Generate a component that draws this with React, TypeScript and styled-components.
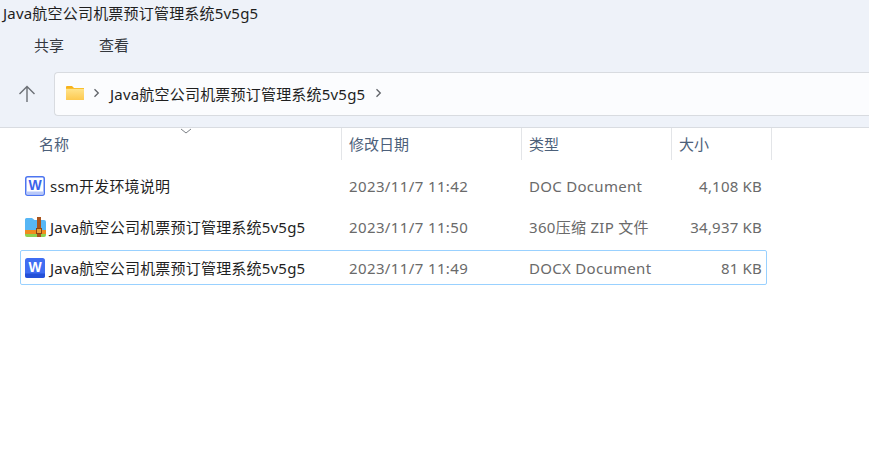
import React from 'react';
import styled, { createGlobalStyle } from 'styled-components';

const GlobalStyle = createGlobalStyle`
  html, body {
    margin: 0;
    padding: 0;
    width: 100%;
    height: 100%;
    overflow: hidden;
    background: #fff;
  }
  * { box-sizing: border-box; }
`;

type FileIcon = 'doc' | 'zip' | 'docx';

interface IFileRow {
  name: string;
  date: string;
  type: string;
  size: string;
  icon: FileIcon;
  selected?: boolean;
}

const files: IFileRow[] = [
  { name: 'ssm开发环境说明', date: '2023/11/7 11:42', type: 'DOC Document', size: '4,108 KB', icon: 'doc' },
  { name: 'Java航空公司机票预订管理系统5v5g5', date: '2023/11/7 11:50', type: '360压缩 ZIP 文件', size: '34,937 KB', icon: 'zip' },
  { name: 'Java航空公司机票预订管理系统5v5g5', date: '2023/11/7 11:49', type: 'DOCX Document', size: '81 KB', icon: 'docx', selected: true },
];

function Icon({ kind }: { kind: FileIcon }) {
  if (kind === 'zip') {
    return (
      <svg width="21" height="20" viewBox="0 0 21 20">
        <path d="M0 2.5A1.5 1.5 0 0 1 1.5 1h5.5l2.5 2H19a2 2 0 0 1 2 2v8H0z" fill="#56b6f5" />
        <rect x="0" y="13" width="21" height="4" fill="#f08c1e" />
        <path d="M0 17h21v1a2 2 0 0 1-2 2H2a2 2 0 0 1-2-2z" fill="#8fd14f" />
        <rect x="12" y="0" width="4" height="20" fill="#a9541c" />
        <rect x="11.5" y="11.5" width="5" height="5" fill="#e9a23b" stroke="#8b4513" strokeWidth="1" />
      </svg>
    );
  }
  if (kind === 'doc') {
    return (
      <svg width="20" height="20" viewBox="0 0 20 20">
        <rect x="0.75" y="0.75" width="18.5" height="18.5" rx="2" fill="#fff" stroke="#4d75f0" strokeWidth="1.5" />
        <rect x="1.5" y="15.5" width="17" height="3" fill="#b9c9fa" />
        <text x="10" y="14" textAnchor="middle" fontFamily="Liberation Sans" fontWeight="700" fontSize="14" letterSpacing="0" fill="#3a63ea">
          W
        </text>
      </svg>
    );
  }
  return (
    <svg width="20" height="20" viewBox="0 0 20 20">
      <rect width="20" height="20" rx="2.5" fill="#3f6df2" />
      <path d="M0 15.5h20V17.5a2.5 2.5 0 0 1-2.5 2.5h-15A2.5 2.5 0 0 1 0 17.5z" fill="#2450d8" />
      <text x="10" y="13.5" textAnchor="middle" fontFamily="Liberation Sans" fontWeight="700" fontSize="14" letterSpacing="0" fill="#fff">
        W
      </text>
    </svg>
  );
}

function Chevron() {
  return (
    <svg width="7" height="10" viewBox="0 0 7 10">
      <path d="M1.5 1.2 5.3 5 1.5 8.8" fill="none" stroke="#5f6368" strokeWidth="1.3" />
    </svg>
  );
}

export default function App() {
  return (
    <Page>
      <GlobalStyle />
      <TopArea>
        <TitleBar>Java航空公司机票预订管理系统5v5g5</TitleBar>
        <MenuBar>
          <MenuItem>共享</MenuItem>
          <MenuItem>查看</MenuItem>
        </MenuBar>
        <NavBar>
          <UpButton>
            <svg width="18" height="18" viewBox="0 0 18 18">
              <path d="M9 17V1.5M1.5 9 9 1.5 16.5 9" fill="none" stroke="#6b6f75" strokeWidth="1.4" />
            </svg>
          </UpButton>
          <AddressBar>
            <svg width="18" height="14" viewBox="0 0 18 14">
              <defs>
                <linearGradient id="folderFill" x1="0" y1="0" x2="0" y2="1">
                  <stop offset="0" stopColor="#ffe58f" />
                  <stop offset="1" stopColor="#fdc94f" />
                </linearGradient>
              </defs>
              <path d="M0 1a1 1 0 0 1 1-1h5l2 2H0z" fill="#f7b21c" />
              <rect y="2" width="18" height="12" rx="0.5" fill="url(#folderFill)" />
              <rect y="2" width="18" height="1" fill="#f9bf2e" />
            </svg>
            <Chevron />
            <Crumb>Java航空公司机票预订管理系统5v5g5</Crumb>
            <Chevron />
          </AddressBar>
        </NavBar>
      </TopArea>

      <HeaderRow>
        <SortMark>
          <svg width="12" height="6" viewBox="0 0 12 6">
            <path d="M1 1 6 5 11 1" fill="none" stroke="#7b7f85" strokeWidth="1" />
          </svg>
        </SortMark>
        <HeaderCell $width={342} $indent={39}>名称</HeaderCell>
        <HeaderCell $width={180}>修改日期</HeaderCell>
        <HeaderCell $width={150}>类型</HeaderCell>
        <HeaderCell $width={100}>大小</HeaderCell>
      </HeaderRow>

      <FileList>
        {files.map((file) => (
          <FileRowBox key={file.date} $selected={file.selected}>
            <NameCell>
              <IconSlot>
                <Icon kind={file.icon} />
              </IconSlot>
              {file.name}
            </NameCell>
            <DateCell>{file.date}</DateCell>
            <TypeCell>{file.type}</TypeCell>
            <SizeCell>{file.size}</SizeCell>
          </FileRowBox>
        ))}
      </FileList>
    </Page>
  );
}

const Page = styled.div`
  width: 869px;
  height: 458px;
  background: #fff;
  font-family: 'Noto Sans', 'Noto Sans CJK SC', sans-serif;
  font-size: 15px;
  letter-spacing: 0.2px;
  color: #1a1a1a;
  overflow: hidden;
`;

const TopArea = styled.div`
  height: 128px;
  background: #eef2f9;
  border-bottom: 1px solid #d9dce1;
`;

const TitleBar = styled.div`
  height: 30px;
  padding-left: 3px;
  line-height: 27px;
  color: #1f1f1f;
`;

const MenuBar = styled.div`
  display: flex;
  gap: 35px;
  height: 30px;
  padding-left: 34px;
  line-height: 30px;
  letter-spacing: 0;
`;

const MenuItem = styled.span`
  color: #33373d;
`;

const NavBar = styled.div`
  display: flex;
  align-items: center;
  height: 44px;
  margin-top: 12px;
`;

const UpButton = styled.div`
  display: flex;
  justify-content: center;
  align-items: center;
  width: 54px;
  height: 100%;
`;

const AddressBar = styled.div`
  display: flex;
  align-items: center;
  flex-grow: 1;
  height: 100%;
  padding: 0 0 2px 11px;
  background: #fbfcfe;
  border: 1px solid #d8dbe0;
  border-right: none;
  border-radius: 4px 0 0 4px;

  > svg:nth-of-type(2) {
    margin-left: 9px;
  }
`;

const Crumb = styled.span`
  margin: 0 10px;
  color: #1f1f1f;
`;

const HeaderRow = styled.div`
  position: relative;
  display: flex;
  height: 32px;
`;

const SortMark = styled.div`
  position: absolute;
  top: 0;
  left: 180px;
  line-height: 0;
`;

const HeaderCell = styled.div<{ $width: number; $indent?: number }>`
  width: ${(props) => props.$width}px;
  padding-left: ${(props) => props.$indent ?? 7}px;
  border-right: 1px solid #e3e5e8;
  line-height: 32px;
  letter-spacing: 0;
  color: #4c607a;
`;

const FileList = styled.div`
  display: flex;
  flex-direction: column;
  gap: 6px;
  margin: 8px 0 0 20px;
  width: 747px;
`;

const FileRowBox = styled.div<{ $selected?: boolean }>`
  display: flex;
  align-items: center;
  height: 35px;
  border: 1px solid ${(props) => (props.$selected ? '#99d1ff' : 'transparent')};
  border-radius: 2px;
`;

const NameCell = styled.div`
  display: flex;
  align-items: center;
  width: 328px;
  white-space: nowrap;
  color: #1f1f1f;
`;

const IconSlot = styled.span`
  display: flex;
  justify-content: center;
  width: 28px;
  margin-right: 1px;
`;

const DateCell = styled.div`
  width: 180px;
  letter-spacing: 0.38px;
  color: #6a6a6a;
`;

const TypeCell = styled.div`
  width: 130px;
  white-space: nowrap;
  letter-spacing: 0.3px;
  color: #6a6a6a;
`;

const SizeCell = styled.div`
  width: 103px;
  text-align: right;
  color: #6a6a6a;
`;
